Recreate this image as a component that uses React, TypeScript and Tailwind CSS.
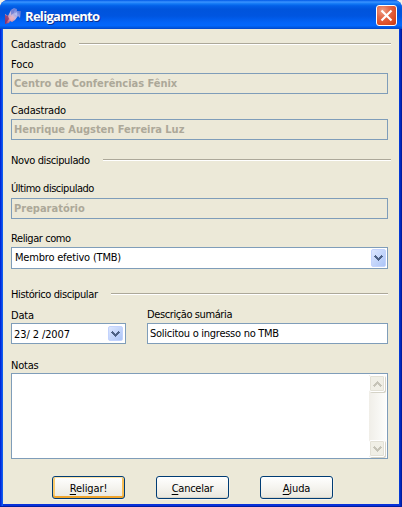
import type { ReactNode } from 'react';

const FONT = "font-['DejaVu_Sans_Condensed','DejaVu_Sans',sans-serif]";

function Label({ children, className = '' }: { children: ReactNode; className?: string }) {
  return <div className={`h-[14px] whitespace-nowrap text-[11px] leading-[16px] ${className}`}>{children}</div>;
}

function Group({ title, className = '', gap, spacing = '' }: { title: string; className?: string; gap: string; spacing?: string }) {
  return (
    <div className={`flex h-[14px] ${className}`}>
      <Label className={`${gap} ${spacing}`}>{title}</Label>
      <div className="mt-[6px] h-[2px] grow border-t border-[#aca899] bg-white" />
    </div>
  );
}

function Locked({ children, className = '' }: { children: ReactNode; className?: string }) {
  return (
    <div className="h-[21px] w-[377px] border border-[#7f9db9] pl-[2px] pt-[2px]">
      <Label className={`font-bold text-[#aca899] ${className}`}>{children}</Label>
    </div>
  );
}

function DropArrow() {
  return (
    <div className="flex h-full w-[15px] items-center justify-center rounded-[2px] border border-[#c3d3fd] bg-linear-to-br from-[#dce6fe] to-[#acc5f7]">
      <svg width="9" height="6" viewBox="0 0 9 6" shapeRendering="crispEdges" fill="#4d6185">
        <path d="M1 0h1v1h1v1h1v1h1v-1h1v-1h1v-1h1v1h1v1h-1v1h-1v1h-1v1h-1v1h-1v-1h-1v-1h-1v-1h-1v-1h-1v-1h1z" />
      </svg>
    </div>
  );
}

function ScrollArrow({ down = false }: { down?: boolean }) {
  return (
    <div className="flex h-[17px] w-[16px] items-center justify-center rounded-[2px] border border-white bg-[#f0efe6] shadow-[inset_0_0_0_1px_#e3e1d6,1px_1px_0_#d5d3c7]">
      <svg className={down ? 'rotate-180' : ''} width="9" height="6" viewBox="0 0 9 6" shapeRendering="crispEdges" fill="#c6c4b8">
        <path d="M4 0h1v1h1v1h1v1h1v1h1v1h-1v1h-1v-1h-1v-1h-1v-1h-1v1h-1v1h-1v1h-1v-1h-1v-1h1v-1h1v-1h1v-1h1z" />
      </svg>
    </div>
  );
}

function Button({ first, rest, primary = false, spacing }: { first: string; rest: string; primary?: boolean; spacing: string }) {
  return (
    <button
      className={`flex h-[23px] w-[73px] justify-center rounded-[3px] border border-[#003c74] bg-linear-to-b from-white via-[#f5f4ef] to-[#e9e7dd] pt-[4px] ${
        primary ? 'shadow-[inset_0_1px_0_#fde3a8,inset_0_-2px_0_#efa42c,inset_2px_0_0_#f9cb70,inset_-2px_0_0_#f7bd55,0_1px_0_#f7f5ed]' : 'shadow-[inset_0_-1px_0_#d9d5c9,0_1px_0_#f7f5ed,1px_0_0_#f3f1e6]'
      }`}
    >
      <Label className={spacing}>
        <span className="underline decoration-1 underline-offset-[2px]">{first}</span>
        {rest}
      </Label>
    </button>
  );
}

export default function App() {
  return (
    <div className="h-[507px] w-[402px] overflow-hidden bg-[#f3f1e7]">
      <div className={`flex h-full flex-col overflow-hidden rounded-t-[8px] bg-[#0831d9] text-black ${FONT}`}>
        <header className="flex h-[29px] shrink-0 items-center bg-[linear-gradient(180deg,#0058e6_0%,#3a93ff_7%,#1279f5_13%,#0360e8_20%,#0054dc_32%,#0055e0_55%,#0264f8_78%,#0267fc_88%,#0057e0_95%,#0046ca_100%)] pl-[5px] pr-[5px]">
          <svg width="16" height="16" viewBox="0 0 16 16" className="mt-[2px]">
            <defs>
              <linearGradient id="gem" x1="0" y1="1" x2="1" y2="0">
                <stop offset="0" stopColor="#8c2a5c" />
                <stop offset=".25" stopColor="#d98a9c" />
                <stop offset=".5" stopColor="#c9b8dc" />
                <stop offset=".7" stopColor="#8b9ae4" />
                <stop offset="1" stopColor="#3350c0" />
              </linearGradient>
            </defs>
            <path d="M0 6 L3 8 L6 2 L9 0 L12 1 L12 3 L16 3 L15 10 L13 8 L10 12 L7 14 L5 13 L4 15 L0 16 Z" fill="url(#gem)" />
            <path d="M0 7 L3 8 L4 11 L1 15 L0 15 Z" fill="#7d2c6c" opacity=".75" />
            <path d="M6 2 L10 1 L9 5 L6 7 Z" fill="#5f74d2" opacity=".7" />
            <path d="M4 9 L8 8 L9 11 L6 13 Z" fill="#efb5bd" opacity=".7" />
            <path d="M9 6 L12 4 L12 8 Z" fill="#b9c6f5" opacity=".8" />
          </svg>
          <h1 className="ml-[4px] mt-[3px] grow whitespace-nowrap font-['Open_Sans',sans-serif] text-[13px] font-bold leading-[18px] tracking-[-0.7px] text-white [text-shadow:1px_1px_0_#0b2f91]">Religamento</h1>
          <button className="mt-[2px] flex h-[21px] w-[21px] items-center justify-center rounded-[3px] border border-white bg-[radial-gradient(circle_at_30%_25%,#f0a084_0%,#e3694a_35%,#dc4e26_70%,#c23810_100%)]">
            <svg width="13" height="13" viewBox="0 0 13 13" stroke="white" strokeWidth="2.2">
              <path d="M1.5 1.5 L11.5 11.5 M11.5 1.5 L1.5 11.5" />
            </svg>
          </button>
        </header>

        <div className="flex min-h-0 grow border-b border-[#001ea0]">
          <div className="w-[3px] shrink-0 bg-linear-to-r from-[#0019cf] via-[#0840e8] to-[#1668f0]" />
          <main className="flex h-[475px] w-[396px] flex-col bg-[#ece9d8] pl-[8px]">
            <Group title="Cadastrado" className="mt-[8px] w-[380px]" gap="w-[68px]" spacing="tracking-[-0.2px]" />
            <Label className="mt-[6px] tracking-[-0.1px]">Foco</Label>
            <div className="mt-[2px]"><Locked className="tracking-[-0.03px]">Centro de Conferências Fênix</Locked></div>
            <Label className="mt-[9px] tracking-[-0.2px]">Cadastrado</Label>
            <div className="mt-[2px]"><Locked className="tracking-[-0.03px]">Henrique Augsten Ferreira Luz</Locked></div>
            <Group title="Novo discipulado" className="mt-[13px] w-[380px]" gap="w-[92px]" spacing="tracking-[-0.37px]" />
            <Label className="mt-[14px] tracking-[-0.48px]">Último discipulado</Label>
            <div className="mt-[3px]"><Locked>Preparatório</Locked></div>
            <Label className="mt-[12px] tracking-[-0.42px]">Religar como</Label>
            <div className="mt-[2px] flex h-[22px] w-[377px] justify-between border border-[#7f9db9] bg-white py-px pl-[3px] pr-px">
              <Label className="mt-[1px] tracking-[-0.2px]">Membro efetivo (TMB)</Label>
              <DropArrow />
            </div>
            <Group title="Histórico discipular" className="mt-[18px] w-[377px]" gap="w-[100px]" spacing="tracking-[-0.4px]" />
            <div className="mt-[6px] flex">
              <div className="w-[136px]">
                <Label className="mt-[1px] tracking-[-0.2px]">Data</Label>
                <div className="mt-[1px] flex h-[21px] w-[115px] justify-between border border-[#7f9db9] bg-white pb-[2px] pl-[2px] pr-[2px] pt-[2px]">
                  <Label className="mt-[1px] tracking-[-0.1px]">23/ 2 /2007</Label>
                  <DropArrow />
                </div>
              </div>
              <div>
                <Label className="tracking-[-0.4px]">Descrição sumária</Label>
                <div className="mt-[2px] h-[21px] w-[241px] border border-[#7f9db9] bg-white pl-[2px] pt-[2px]">
                  <Label className="tracking-[-0.27px]">Solicitou o ingresso no TMB</Label>
                </div>
              </div>
            </div>
            <Label className="mt-[14px] tracking-[-0.2px]">Notas</Label>
            <div className="mt-[1px] flex h-[86px] w-[377px] shrink-0 justify-end border border-[#7f9db9] bg-white p-px">
              <div className="flex w-[17px] flex-col justify-between bg-linear-to-r from-[#f0eee8] to-[#fdfdfb]">
                <ScrollArrow />
                <ScrollArrow down />
              </div>
            </div>
            <div className="ml-[41px] mt-[17px] flex gap-[31px]">
              <Button first="R" rest="eligar!" primary spacing="tracking-[-0.1px]" />
              <Button first="C" rest="ancelar" spacing="tracking-[-0.25px]" />
              <Button first="A" rest="juda" spacing="tracking-[-0.1px]" />
            </div>
          </main>
          <div className="w-[3px] shrink-0 bg-linear-to-r from-[#0841e0] via-[#0028bd] to-[#001590]" />
        </div>
      </div>
    </div>
  );
}
